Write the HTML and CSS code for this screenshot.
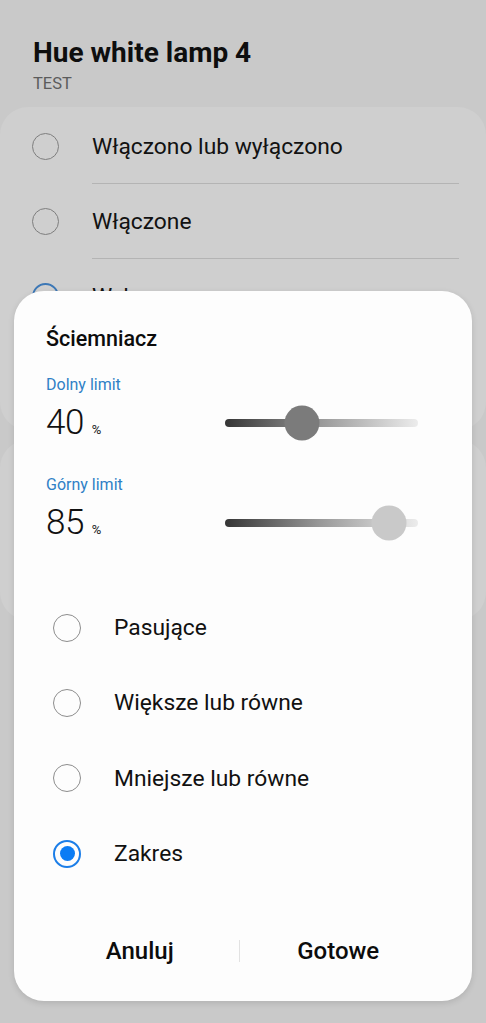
FILE: index.html
```html
<!DOCTYPE html>
<html lang="pl">
<head>
<meta charset="utf-8">
<title>Hue white lamp 4</title>
<link rel="stylesheet" href="styles.css">
</head>
<body>
<div class="screen">
  <header class="head">
    <h1 class="head-title">Hue white lamp 4</h1>
    <div class="head-sub">TEST</div>
  </header>

  <section class="card">
    <div class="item">
      <span class="radio"></span>
      <span class="item-text">Włączono lub wyłączono</span>
    </div>
    <div class="item">
      <span class="radio"></span>
      <span class="item-text">Włączone</span>
    </div>
    <div class="item">
      <span class="radio radio-on"></span>
      <span class="item-text">Wyłączone</span>
    </div>
    <div class="item item-last">
      <span class="radio"></span>
      <span class="item-text">Ściemniacz</span>
    </div>
  </section>

  <section class="card card-second">
    <div class="item item-last">
      <span class="item-text">Temperatura</span>
    </div>
  </section>

  <div class="dialog">
    <h2 class="dlg-title">Ściemniacz</h2>

    <div class="limit">
      <div class="limit-label">Dolny limit</div>
      <div class="limit-row">
        <div class="limit-value"><span class="num">40</span><span class="pct">%</span></div>
        <div class="slider">
          <div class="track"></div>
          <div class="thumb thumb-dark" style="left:40%"></div>
        </div>
      </div>
    </div>

    <div class="limit limit-second">
      <div class="limit-label">Górny limit</div>
      <div class="limit-row">
        <div class="limit-value"><span class="num">85</span><span class="pct">%</span></div>
        <div class="slider">
          <div class="track"></div>
          <div class="thumb thumb-light" style="left:85%"></div>
        </div>
      </div>
    </div>

    <div class="options">
      <div class="opt"><span class="oradio"></span><span class="opt-text">Pasujące</span></div>
      <div class="opt"><span class="oradio"></span><span class="opt-text">Większe lub równe</span></div>
      <div class="opt"><span class="oradio"></span><span class="opt-text">Mniejsze lub równe</span></div>
      <div class="opt"><span class="oradio oradio-on"></span><span class="opt-text">Zakres</span></div>
    </div>

    <div class="buttons">
      <div class="btn">Anuluj</div>
      <div class="btn-sep"></div>
      <div class="btn">Gotowe</div>
    </div>
  </div>
</div>
</body>
</html>
```

FILE: styles.css
```css
* { box-sizing: border-box; }
html, body {
  margin: 0;
  padding: 0;
  background: #c9c9c9;
}
body {
  font-family: Roboto, "Noto Sans", "Liberation Sans", sans-serif;
  color: #111;
}
.screen {
  position: relative;
  width: 486px;
  height: 1023px;
  overflow: hidden;
  background: #c9c9c9;
}
.head {
  padding: 36px 33px 0 33px;
  height: 107px;
}
.head-title {
  margin: 0;
  font-size: 28px;
  line-height: 34px;
  font-weight: 700;
  color: #0e0e0e;
}
.head-sub {
  margin-top: 4px;
  font-size: 16.5px;
  line-height: 20px;
  color: #5c5c5c;
}
.card {
  background: #cfcfcf;
  border-radius: 28px;
  height: 323px;
  padding-top: 2px;
  overflow: hidden;
}
.card-second {
  margin-top: 10px;
  height: 180px;
}
.item {
  height: 75px;
  display: flex;
  align-items: center;
  padding-left: 32px;
  position: relative;
}
.item::after {
  content: "";
  position: absolute;
  left: 92px;
  right: 27px;
  bottom: 0;
  height: 1px;
  background: #b4b4b4;
}
.item-last::after { display: none; }
.radio {
  width: 27px;
  height: 27px;
  border-radius: 50%;
  border: 1.5px solid #7e7e7e;
  flex: none;
}
.radio-on {
  border: 2px solid #3d78b6;
}
.item-text {
  margin-left: 33px;
  font-size: 22.8px;
  color: #121212;
}

/* dialog */
.dialog {
  position: absolute;
  left: 14px;
  top: 291px;
  width: 458px;
  height: 710px;
  background: #fdfdfd;
  border-radius: 30px;
  box-shadow: 0 2px 6px rgba(0,0,0,0.12);
  padding: 36px 32px 20px 32px;
  display: flex;
  flex-direction: column;
}
.dlg-title {
  margin: 0;
  font-size: 21.5px;
  line-height: 24px;
  font-weight: 500;
  color: #0c0c0c;
}
.limit { margin-top: 24px; }
.limit-second { margin-top: 32px; }
.limit-label {
  font-size: 16px;
  line-height: 20px;
  color: #2f80c6;
}
.limit-row {
  margin-top: 8px;
  height: 40px;
  display: flex;
  align-items: center;
}
.limit-value {
  flex: 1;
  display: flex;
  align-items: baseline;
}
.num {
  font-size: 35px;
  font-weight: 300;
  line-height: 36px;
  color: #111;
  letter-spacing: -0.5px;
}
.pct {
  font-size: 13px;
  line-height: 1;
  margin-left: 8px;
  color: #222;
}
.slider {
  position: relative;
  width: 193px;
  height: 36px;
  margin-right: 22px;
  display: flex;
  align-items: center;
}
.track {
  width: 100%;
  height: 8px;
  border-radius: 4px;
  background: linear-gradient(to right, #353535 0%, #9a9a9a 50%, #ececec 100%);
}
.thumb {
  position: absolute;
  top: 50%;
  width: 35px;
  height: 35px;
  border-radius: 50%;
  transform: translate(-50%, -50%);
}
.thumb-dark { background: #7b7b7b; }
.thumb-light { background: #c9c9c9; }

.options {
  margin-top: 47px;
  display: flex;
  flex-direction: column;
}
.opt {
  height: 75.3px;
  display: flex;
  align-items: center;
  padding-left: 7px;
}
.oradio {
  width: 28px;
  height: 28px;
  border-radius: 50%;
  border: 1.5px solid #8d8d8d;
  flex: none;
  display: flex;
  align-items: center;
  justify-content: center;
}
.oradio-on {
  border: 2px solid #1c7ee8;
}
.oradio-on::before {
  content: "";
  width: 15px;
  height: 15px;
  border-radius: 50%;
  background: #0b7cf4;
}
.opt-text {
  margin-left: 33px;
  font-size: 22.8px;
  color: #111;
}
.buttons {
  margin-top: auto;
  margin-left: -5px;
  margin-right: 3px;
  height: 60px;
  display: flex;
  align-items: center;
}
.btn {
  flex: 1;
  text-align: center;
  font-size: 24px;
  font-weight: 500;
  color: #0c0c0c;
}
.btn-sep {
  width: 1px;
  height: 22px;
  background: #e2e2e2;
}
```
